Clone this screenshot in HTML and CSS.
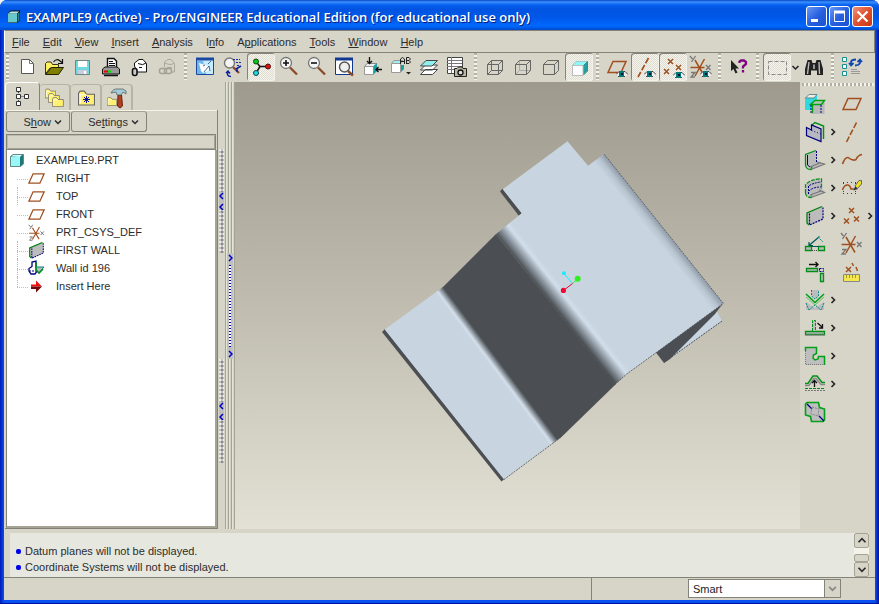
FILE: index.html
```html
<!DOCTYPE html>
<html lang="en">
<head>
<meta charset="utf-8">
<title>EXAMPLE9 (Active) - Pro/ENGINEER Educational Edition</title>
<link rel="stylesheet" href="styles.css">
</head>
<body>
<svg class="defs" aria-hidden="true">
  <symbol id="eye" viewBox="0 0 12 8"><path d="M0 4.500L3 1.500H9L12 4.500L9 7H3Z" fill="#eee"/><path d="M0 4.500L3 1.500H9L12 4.500M2 6.500H9" fill="none" stroke="#444"/><rect x="3" y="1" width="5" height="6" fill="#007878"/><rect x="5" y="3" width="2" height="2" fill="#013"/></symbol>
  <symbol id="plane" viewBox="0 0 28 28"><path d="M10 8.500H23L18 19.500H5Z" fill="none" stroke="#a05020" stroke-width="1.500"/></symbol>
  <symbol id="csys" viewBox="0 0 28 28"><path d="M3.500 14.500H17.500M8 7L17 22.500M17.500 6L8 23" fill="none" stroke="#a05020" stroke-width="1.500"/><path d="M3 3L5.500 6M8.500 3L4.500 9M19 12L23.500 17M23.500 12L19 17M4 19.500H8L4 24H8" fill="none" stroke="#777" stroke-width="1.300"/></symbol>
  <symbol id="chev-r" viewBox="0 0 9 28"><path d="M2.500 11L5.500 14L2.500 17" fill="none" stroke="#222" stroke-width="1.600"/></symbol>
  <symbol id="chev-d" viewBox="0 0 8 6"><path d="M1 1.500L4 4.500L7 1.500" fill="none" stroke="currentColor" stroke-width="1.500"/></symbol>
  <symbol id="folder" viewBox="0 0 16 14"><path d="M.5 13.500V2.500L2 .5H6L8 3.500H15.500V13.500Z" fill="#fff070" stroke="#666"/><path d="M2 12V4H8" fill="none" stroke="#fff"/></symbol>
  <symbol id="lens" viewBox="0 0 28 28"><path d="M15 14.500L22 21.500" stroke="#8a4a28" stroke-width="2.300"/><circle cx="11" cy="10" r="5.500" fill="#f4f4f4" stroke="#777" stroke-width="1.300"/></symbol>
  <symbol id="wall" viewBox="0 0 28 28"><path d="M7 10.500L22 4.500V17L8 23.500L5.500 21V11.500Z" fill="#bcbcbc"/><path d="M8.500 11.500V23L22 17V5.500" fill="none" stroke="#000080" stroke-width="1.200" stroke-dasharray="2 1"/><path d="M8 23L6 21V11L21 4.500" fill="none" stroke="#008010" stroke-width="1.300"/></symbol>
</svg>
<div class="window">
  <header class="titlebar">
    <svg class="appicon" width="14" height="14" viewBox="0 0 14 14"><path d="M1 3L4 .5H13V10L10 13H1Z" fill="#111"/><path d="M1 3.500H10V12.500H1Z" fill="#68c8cc"/><path d="M1 3.500L4 1.500H12L10 3.500Z" fill="#b0f0f0"/><path d="M10.500 12V4L12.500 2V10Z" fill="#308088"/></svg>
    <h1>EXAMPLE9 (Active) - Pro/ENGINEER Educational Edition (for educational use only)</h1>
    <button class="cap" aria-label="Minimize"><svg width="19" height="19"><rect x="4" y="12" width="7" height="3" fill="#fff"/></svg></button>
    <button class="cap" aria-label="Maximize"><svg width="19" height="19"><path d="M4.500 4.500H14.500V14.500H4.500Z" fill="none" stroke="#fff"/><path d="M4 5H15" stroke="#fff" stroke-width="3"/></svg></button>
    <button class="cap close" aria-label="Close"><svg width="19" height="19"><path d="M4.500 4.500L14.500 14.500M14.500 4.500L4.500 14.500" stroke="#fff" stroke-width="2.200"/></svg></button>
  </header>
  <div class="client">
  <nav class="menubar">
    <a href="#"><u>F</u>ile</a><a href="#"><u>E</u>dit</a><a href="#"><u>V</u>iew</a><a href="#"><u>I</u>nsert</a><a href="#"><u>A</u>nalysis</a><a href="#">I<u>n</u>fo</a><a href="#">A<u>p</u>plications</a><a href="#"><u>T</u>ools</a><a href="#"><u>W</u>indow</a><a href="#"><u>H</u>elp</a>
  </nav>
  <div class="toolbar">
    <i class="grip"></i>
    <button aria-label="New"><svg viewBox="0 0 28 28"><path d="M8.500 6.500H16.500L20.500 10.500V20.500H8.500Z" fill="#fff" stroke="#555"/><path d="M16.500 6.500V10.500H20.500" fill="none" stroke="#777"/></svg></button>
    <button aria-label="Open"><svg viewBox="0 0 28 28"><path d="M4.500 21V10.500L6 9H10L11.500 11.500H17.500V15H9Z" fill="#fff060" stroke="#332"/><path d="M4.500 21.500L10.500 14.500H22.500L17.500 21.500Z" fill="#808000" stroke="#220"/><path d="M12.500 9Q15.500 5 19 8L21 9.500M21.500 6V10.500H17" fill="none" stroke="#111" stroke-width="1.200"/></svg></button>
    <button aria-label="Save"><svg viewBox="0 0 28 28"><path d="M6.500 7.500H20.500V21.500H6.500Z" fill="#70d8e0" stroke="#688"/><path d="M9 8H18V14H9Z" fill="#fff"/><path d="M9 17H18V21H9Z" fill="#ccd"/><path d="M15 18H17V21H15Z" fill="#fff"/></svg></button>
    <button aria-label="Print"><svg viewBox="0 0 28 28"><path d="M10.500 15.500V5.500H17L19.500 8V15.500Z" fill="#fff" stroke="#111" stroke-width="1.400"/><path d="M12 8.500H16M12 10.500H18M12 12.500H18" stroke="#111"/><path d="M5.500 16L8 14H20L22.500 16V21H5.500Z" fill="#999" stroke="#111"/><path d="M7 22.500H21" stroke="#111" stroke-width="1.500"/><path d="M7 18.500H11" stroke="#e00" stroke-width="2"/><path d="M11 18.500H14" stroke="#0d0" stroke-width="2"/></svg></button>
    <button aria-label="Mail"><svg viewBox="0 0 28 28"><path d="M9.500 13V10L14 6.500H18L21.500 10.500V19H12Z" fill="#fff" stroke="#111"/><path d="M13 10.500Q18 13 21 10" fill="none" stroke="#111"/><rect x="7.500" y="15.500" width="4.500" height="7" rx="2" fill="#ccc" stroke="#111" stroke-width="1.600"/><path d="M14 14.500H17" stroke="#111"/></svg></button>
    <button aria-label="Mail link" disabled><svg viewBox="0 0 28 28"><path d="M11.500 14V9L15 6.500H18L21.500 10.500V19H19M12 10Q18 13 21 10M14 14.500H19" fill="none" stroke="#aaa79a"/><rect x="6.500" y="15.500" width="7" height="5" rx="2" fill="none" stroke="#a4a194" stroke-width="1.500"/><rect x="11.500" y="15.500" width="7" height="5" rx="2" fill="none" stroke="#a4a194" stroke-width="1.500"/></svg></button>
    <i class="grip"></i>
    <button aria-label="Repaint"><svg viewBox="0 0 28 28"><path d="M5.500 5.500H22.500V21.500H5.500Z" fill="#c4ecfc" stroke="#1848a0"/><path d="M5 6H23" stroke="#1848a0" stroke-width="3"/><path d="M6 8H12L15 21H6Z" fill="#70b4e8"/><path d="M8 10L17 13L19 17L12 20L10 18Z" fill="#fff"/><path d="M17 11L20 8M13 19L18 13L19 18M12 13L14 12" fill="none" stroke="#204880" stroke-width=".8"/></svg></button>
    <button aria-label="Spin center"><svg viewBox="0 0 28 28"><path d="M14 14L20 20" stroke="#8a4a28" stroke-width="2.300"/><circle cx="10.500" cy="10" r="5" fill="#f4f4f4" stroke="#777" stroke-width="1.400"/><path d="M14 6.500H21M17 9.500H22M18 12.500H21" stroke="#1030b0" stroke-dasharray="2 1"/><path d="M12 23.500Q7 23 9 19M7 20L9 18L11 20.500M17 16L22 13M18 19V16" fill="none" stroke="#1020a0" stroke-width="1.500"/></svg></button>
    <button class="on" aria-label="Orient mode"><svg viewBox="0 0 28 28"><path d="M9 8.500L13 13.500L9 20M13 13.500H21" fill="none" stroke="#111" stroke-width="1.500"/><circle cx="9" cy="8.500" r="2.500" fill="#0c1" stroke="#141"/><circle cx="21" cy="13.500" r="2.500" fill="#e01010" stroke="#411"/><circle cx="9" cy="20" r="2.500" fill="#20dce0" stroke="#144"/></svg></button>
    <button aria-label="Zoom in"><svg viewBox="0 0 28 28"><use href="#lens"/><path d="M8 10H14M11 7V13" stroke="#111" stroke-width="1.600"/></svg></button>
    <button aria-label="Zoom out"><svg viewBox="0 0 28 28"><use href="#lens"/><path d="M8 10H14" stroke="#111" stroke-width="1.600"/></svg></button>
    <button aria-label="Refit"><svg viewBox="0 0 28 28"><path d="M4.500 5.500H21.500V21.500H4.500Z" fill="#fff" stroke="#103890"/><path d="M4 6H22" stroke="#103890" stroke-width="3"/><path d="M17 18L22 22.500" stroke="#8a4a28" stroke-width="2.400"/><circle cx="13.500" cy="14" r="5" fill="#eee" stroke="#555" stroke-width="1.400"/></svg></button>
    <button aria-label="Reorient"><svg viewBox="0 0 28 28"><path d="M5.500 13.500L8 10.500H18L14.500 13.500Z" fill="#eee" stroke="#888"/><path d="M5.500 13.500H14.500V21.500H5.500Z" fill="#fff" stroke="#999"/><path d="M14.500 13L18 10.500V18L14.500 21.500Z" fill="#18a0a0"/><path d="M10.500 4V10M8 8L10.500 10.500L13 8M23 16.500H17M19.500 14L17 16.500L19.500 19" fill="none" stroke="#111" stroke-width="1.300"/></svg></button>
    <button aria-label="Saved views"><svg viewBox="0 0 28 28"><path d="M4.500 10.500L7 7.500H16L13.500 10.500Z" fill="#a0f0f0" stroke="#999"/><path d="M4.500 10.500H13.500V19.500H4.500Z" fill="#fff" stroke="#999"/><path d="M14 12H17V16L14 19Z" fill="#18a0a0"/><path d="M13.500 11V6L15.500 4.500L17.500 6V11M14 8.500H17M19.500 11V4.500H22L23.500 6L22 7.500H19.500M22 7.500L23.500 9L22 10.500H19.500" fill="none" stroke="#222"/><path d="M19 19H24L21.500 21.500Z" fill="#222"/></svg></button>
    <button aria-label="Layers"><svg viewBox="0 0 28 28"><path d="M5.500 21.500L10.500 16.500H22.500L17.500 21.500ZM5.500 17L10.500 12H22.500L17.500 17Z" fill="#fff" stroke="#444"/><path d="M5.500 13L11 7.500H22.500L17 13Z" fill="#90f0f0" stroke="#444"/></svg></button>
    <button aria-label="View manager"><svg viewBox="0 0 28 28"><path d="M4.500 4.500H19.500V20.500H4.500Z" fill="#fff" stroke="#444"/><path d="M4 7.500H19M4 10.500H19M4 13.500H19M4 16.500H19M8.500 4V20" stroke="#777"/><path d="M11.500 15.500H14L15.500 14H19L20 15.500H23.500V23.500H11.500Z" fill="#bbb8a0" stroke="#222"/><circle cx="17.500" cy="19.500" r="2.500" fill="#ddd" stroke="#111" stroke-width="1.300"/></svg></button>
    <i class="grip"></i>
    <button aria-label="Wireframe"><svg viewBox="0 0 28 28"><path d="M6.500 11.500H17.500V21.500H6.500ZM10.500 7.500H21.500V17.500H10.500ZM6.500 11.500L10.500 7.500M17.500 11.500L21.500 7.500M17.500 21.500L21.500 17.500M6.500 21.500L10.500 17.500" fill="none" stroke="#666"/></svg></button>
    <button aria-label="Hidden line"><svg viewBox="0 0 28 28"><path d="M10.500 7.500V17.500H21.500M10.500 17.500L6.500 21.500" fill="none" stroke="#aaa"/><path d="M6.500 11.500H17.500V21.500H6.500ZM6.500 11.500L10.500 7.500H21.500V17.500L17.500 21.500M17.500 11.500L21.500 7.500" fill="none" stroke="#666"/></svg></button>
    <button aria-label="No hidden"><svg viewBox="0 0 28 28"><path d="M6.500 11.500H17.500V21.500H6.500ZM6.500 11.500L10.500 7.500H21.500V17.500L17.500 21.500M17.500 11.500L21.500 7.500" fill="none" stroke="#666"/></svg></button>
    <button class="on" aria-label="Shading"><svg viewBox="0 0 28 28"><path d="M7.500 12.500L11 8.500H22.500L18.500 12.500Z" fill="#90f8f8" stroke="#9cc"/><path d="M18.500 12.500L22.500 8.500V18L18.500 22Z" fill="#20a0a0" stroke="#4a8888"/><path d="M7.500 12.500H18V22.500H7.500Z" fill="#fff" stroke="#bbb"/></svg></button>
    <i class="grip"></i>
    <button aria-label="Plane display"><svg viewBox="0 0 28 28"><use href="#plane"/><use href="#eye" x="13" y="17" width="12" height="8"/></svg></button>
    <button class="on" aria-label="Axis display"><svg viewBox="0 0 28 28"><path d="M17.500 5L7 24" stroke="#a05020" stroke-width="1.600" stroke-dasharray="6 2"/><use href="#eye" x="13" y="17" width="12" height="8"/></svg></button>
    <button class="on" aria-label="Point display"><svg viewBox="0 0 28 28"><path d="M9 6L14 11M14 6L9 11M17 12L22 17M22 12L17 17M5 16L10 21M10 16L5 21" stroke="#a05020" stroke-width="1.500"/><use href="#eye" x="14" y="18" width="12" height="8"/></svg></button>
    <button aria-label="Coordinate system display"><svg viewBox="0 0 28 28"><use href="#csys"/><use href="#eye" x="13" y="17" width="12" height="8"/></svg></button>
    <i class="grip"></i>
    <button aria-label="Context help"><svg viewBox="0 0 28 28"><path d="M6 7V18L8.500 16L10.500 20.500L12.500 19.500L10.500 15.500H14Z" fill="#222"/><path d="M14.500 10V8.500L16 7.500H19L21 9V11L18 13.500V15.500M18 17V19.500" fill="none" stroke="#800080" stroke-width="2.300"/></svg></button>
    <i class="grip"></i>
    <button class="on" aria-label="Select box"><svg viewBox="0 0 28 28"><path d="M5.500 8.500H23.500V21.500H5.500Z" fill="none" stroke="#888" stroke-dasharray="4 2"/></svg></button>
    <button class="narrow" aria-label="Select options"><svg viewBox="0 0 9 28"><path d="M1.500 13L4.500 16L7.500 13" fill="none" stroke="#222" stroke-width="1.500"/></svg></button>
    <button aria-label="Find"><svg viewBox="0 0 28 28"><path d="M7.500 7H11.500L12.500 10H15.500L16.500 7H20.500L23 16V22H17V17.500H11V22H5V16Z" fill="#222"/><path d="M9 9L7.500 21M19 9L19.500 21" stroke="#bbb" stroke-width="1.400"/><path d="M13 11.500H15V16H13Z" fill="#999"/></svg></button>
    <i class="grip"></i>
    <button aria-label="Regenerate"><svg viewBox="0 0 28 28"><path d="M4.500 4.500H8.500V8.500H4.500ZM4.500 11.500H8.500V15.500H4.500ZM4.500 18.500H8.500V22.500H4.500Z" fill="#fff" stroke="#189090"/><path d="M13 12V9Q13.500 6.500 18 6.500M11 10L13 12.500L15.500 10M22 7V10Q21 12.500 17 12.500M19.500 9L22 6.500L24 9" fill="none" stroke="#1048b0" stroke-width="1.800"/><path d="M13 16.500H19M13 18.500H22M13 20.500H22" stroke="#999"/></svg></button>
  </div>
  <main class="work">
    <aside class="navigator">
      <div class="tabs">
        <button class="tab current" aria-label="Model tree"><svg width="16" height="22" viewBox="0 0 16 22"><path d="M3.500 4V17M3.500 10.500H10" stroke="#444" stroke-dasharray="1 1"/><path d="M1.500 1.500H5.500V5.500H1.500ZM1.500 8.500H5.500V12.500H1.500ZM9.500 8.500H13.500V12.500H9.500ZM1.500 15.500H5.500V19.500H1.500Z" fill="#fff" stroke="#333"/></svg></button>
        <button class="tab" aria-label="Folder browser"><svg width="20" height="20" viewBox="0 0 20 20"><use href="#folder" x="0" y="0" width="11" height="11"/><use href="#folder" x="3" y="5" width="12" height="10"/><use href="#folder" x="7" y="9" width="12" height="10"/></svg></button>
        <button class="tab" aria-label="Favorites"><svg width="18" height="18" viewBox="0 0 18 18"><use href="#folder" x="1" y="1" width="17" height="16"/><path d="M6 10.500H13M9.500 7V14M7 8L12 13M12 8L7 13" stroke="#1010a0"/></svg></button>
        <button class="tab" aria-label="Connections"><svg width="22" height="22" viewBox="0 0 22 22"><use href="#folder" x="1" y="9" width="10" height="11"/><path d="M12 8H15.500L16.500 19L14 21L11.500 19Z" fill="#b04020" stroke="#621"/><path d="M5 6Q7 1.500 12 2H17L20 4V7L17 5L15 8H11L10 5Z" fill="#a4ccd8" stroke="#566" stroke-width=".8"/></svg></button>
      </div>
      <div class="panel">
        <div class="actions">
          <button class="show"><span>S<u>h</u>ow</span><svg width="8" height="6"><use href="#chev-d"/></svg></button>
          <button class="settings"><span>Se<u>t</u>tings</span><svg width="8" height="6"><use href="#chev-d"/></svg></button>
        </div>
        <div class="colhead"></div>
        <div class="tree">
          <div class="root"><svg width="14" height="14" viewBox="0 0 14 14"><path d="M.5 3.500L3 1.500H13.500V11L10.500 13.500H.5Z" fill="#207878" stroke="#688"/><path d="M1 4H10V13H1Z" fill="#98f8f8"/><path d="M1 3.500L3 2H12L10 4Z" fill="#c8ffff"/></svg>EXAMPLE9.PRT</div>
          <ul>
            <li><svg viewBox="4 4 20 20"><use href="#plane" width="28" height="28"/></svg>RIGHT</li>
            <li><svg viewBox="4 4 20 20"><use href="#plane" width="28" height="28"/></svg>TOP</li>
            <li><svg viewBox="4 4 20 20"><use href="#plane" width="28" height="28"/></svg>FRONT</li>
            <li><svg viewBox="2 2 23 23"><use href="#csys" width="28" height="28"/></svg>PRT_CSYS_DEF</li>
            <li><svg viewBox="4 4 20 20"><use href="#wall" width="28" height="28"/></svg>FIRST WALL</li>
            <li><svg viewBox="0 0 17 17"><path d="M1 8.500L4 6.500V2L8 1V6L9 11L7 14H3L1 11Z" fill="#fff" stroke="#000080" stroke-width="1.300"/><path d="M1 11H10" stroke="#000080" stroke-dasharray="2 1"/><path d="M8 7H16L11 13L8 10Z" fill="#bbb" stroke="#088"/><path d="M8 2V10L11 13L15 9" fill="none" stroke="#009020" stroke-width="1.600"/></svg>Wall id 196</li>
            <li><svg viewBox="0 0 17 17"><path d="M3 6.500H8V2.500L14 8.500H3Z" fill="#f01010"/><path d="M3 8.500H14L8 14.500V11H3Z" fill="#700808"/></svg>Insert Here</li>
          </ul>
        </div>
      </div>
    </aside>
    <div class="sash left"><div class="handle"><svg width="5" height="18"><path d="M4 1L1 4L4 7M4 12L1 15L4 18" fill="none" stroke="#0000c0" stroke-width="1.500"/></svg></div><div class="handle"><svg width="5" height="18"><path d="M4 1L1 4L4 7M4 12L1 15L4 18" fill="none" stroke="#0000c0" stroke-width="1.500"/></svg></div></div>
    <div class="sash right"><div class="bluehandle"><svg width="5" height="8"><path d="M1 1L4 4L1 7" fill="none" stroke="#0000c0" stroke-width="1.500"/></svg><i></i><svg width="5" height="8"><path d="M1 1L4 4L1 7" fill="none" stroke="#0000c0" stroke-width="1.500"/></svg></div></div>
    <section class="viewport" aria-label="Model view">
      <svg viewBox="235 82 565 447" role="img" aria-label="Shaded sheet metal part">
        <defs>
          <linearGradient id="b1" gradientUnits="userSpaceOnUse" x1="436" y1="294" x2="444" y2="288"><stop offset="0" stop-color="#c8d5e1"/><stop offset=".3" stop-color="#d2deea"/><stop offset="1" stop-color="#4b4f53"/></linearGradient>
          <linearGradient id="b2" gradientUnits="userSpaceOnUse" x1="496" y1="234" x2="511" y2="222"><stop offset="0" stop-color="#4b4f53"/><stop offset=".35" stop-color="#87929c"/><stop offset=".75" stop-color="#d2deea"/><stop offset="1" stop-color="#c8d5e1"/></linearGradient>
          <linearGradient id="b3" gradientUnits="userSpaceOnUse" x1="604" y1="154" x2="594" y2="162"><stop offset="0" stop-color="#8e9ba6"/><stop offset=".5" stop-color="#b7c4d0"/><stop offset="1" stop-color="#c8d5e1"/></linearGradient>
        </defs>
        <path d="M715.700 309L722 321L670 359Z" fill="#c8d5e1"/>
        <path d="M722 321L664 362.500" stroke="#4b4f53" stroke-dasharray="2 1"/>
        <path d="M723 303.500L656 352.500L664 363L670 359L715 314Z" fill="#4b4f53"/>
        <path d="M382 332L385 329L504.500 479L501.500 481.500Z" fill="#4b4f53"/>
        <path d="M442 288L496 234L615.500 384.500L562 436.500L559 436Z" fill="#4b4f53"/>
        <path d="M384.700 329.500L442.700 287.300L562 436.500L504 479.500Z" fill="url(#b1)"/>
        <path d="M502.500 188.500L500 191.500L519 216L522 213Z" fill="#4b4f53"/>
        <path d="M496 234L521.700 213.300L502.700 189.300L567.500 141.300L588 165.700L604.300 154.300L723.300 303.300L626.700 374L615 384.500Z" fill="url(#b2)"/>
        <path d="M592.500 162.600L604.300 154.300L723.300 303.300L711 312Z" fill="url(#b3)"/>
        <path d="M504 479.500L562 436.500M615 384.500L626.700 374L657 352M604.300 154.300L723.300 303.300L657 352" fill="none" stroke="#4b4f53" stroke-width=".8" stroke-dasharray="2 1"/>
        <path d="M572.500 283.500L564 273.500" stroke="#10f0ff"/><path d="M572.500 283.500L578 278.500" stroke="#30f020"/><path d="M572.500 283.500L563.500 290.500" stroke="#f00030"/>
        <circle cx="564" cy="273.300" r="2" fill="#10f0ff"/><circle cx="577.700" cy="278.700" r="3" fill="#30f020"/><circle cx="563.400" cy="290.400" r="2.600" fill="#f00838"/>
      </svg>
    </section>
    <aside class="palette">
      <i class="hgrip"></i>
      <div class="tools">
        <button aria-label="Conversion"><svg viewBox="0 0 28 28"><path d="M4 8L9 4.500H16V10L12 17V20H4Z" fill="#30d8e0"/><path d="M4.500 8L8 4.500H16L13 8Z" fill="#eee" stroke="#688"/><path d="M10.500 16L14 11H23.500V24H10.500Z" fill="#b8b8b8"/><path d="M9.500 14.500L14 10.500H23.500L20.500 14.500ZM11.500 15V23" fill="#b8c8b8" stroke="#00a010" stroke-width="1.400"/><path d="M10 15V24M20 15V24" stroke="#000080" stroke-dasharray="2 1"/></svg></button><i></i>
        <button aria-label="Datum plane"><svg viewBox="0 0 28 28"><use href="#plane"/></svg></button><i></i>

        <button aria-label="Flat wall"><svg viewBox="0 0 28 28"><path d="M11 7L14 4.500L22.500 8V21" fill="none" stroke="#009018" stroke-width="1.500"/><path d="M5.500 9.500L10.500 12V7L20 11V23.500L5.500 17.500Z" fill="#b8b8c0" stroke="#000080" stroke-width="1.200"/><path d="M10.500 12.500L20 16" stroke="#000080" stroke-dasharray="1 2"/></svg></button><svg class="more"><use href="#chev-r"/></svg>
        <button aria-label="Datum axis"><svg viewBox="0 0 28 28"><path d="M18.500 4.500L8.500 24" stroke="#a05020" stroke-width="1.600" stroke-dasharray="6 2"/></svg></button><i></i>

        <button aria-label="Flange wall"><svg viewBox="0 0 28 28"><path d="M6 8.500L15.500 4.500V15L23.500 17.500L10.500 23L5.500 20Z" fill="#bbb"/><path d="M4.500 19V8.500L15 4.500M4.500 19Q5 23.500 10 23.500L11 21" fill="none" stroke="#009018" stroke-width="1.300"/><path d="M6.500 9V19L9 21" fill="none" stroke="#000080"/><path d="M15.500 5V16" stroke="#000080" stroke-dasharray="2 1"/><path d="M10 23.500L23.500 18L16 16M9 21L20 16.500" fill="none" stroke="#777" stroke-width="1.200"/></svg></button><svg class="more"><use href="#chev-r"/></svg>
        <button aria-label="Datum curve"><svg viewBox="0 0 28 28"><path d="M4.500 18Q7 11 10 11.500Q15 15.500 18 13.500Q20 9 24 8.500" fill="none" stroke="#a05020" stroke-width="1.600"/></svg></button><i></i>

        <button aria-label="Extend wall"><svg viewBox="0 0 28 28"><path d="M5 12Q9 6 19 5L21 15L23.500 18L10 23L5 20Z" fill="#bbb"/><path d="M4.500 19V11Q10 4.500 20.500 5V15M4.500 19Q5 23.500 10 23.500L11 21" fill="none" stroke="#009018" stroke-width="1.300" stroke-dasharray="4 1"/><path d="M7.500 20V12Q12 9 20 8M8 17Q12 13 20 13" fill="none" stroke="#000080" stroke-dasharray="2 1"/><path d="M10 23.500L23.500 18.500L18 16M9 21L20 17" fill="none" stroke="#777" stroke-width="1.200"/></svg></button><svg class="more"><use href="#chev-r"/></svg>
        <button aria-label="Sketch"><svg viewBox="0 0 28 28"><path d="M5 8.500H18M5 19.500H18M5.500 9V19M17.500 9V19" stroke="#1040c0" stroke-dasharray="1 3"/><path d="M4.500 16Q6 11 9.500 11Q12 11 13 15L16 15" fill="none" stroke="#a05020" stroke-width="1.600"/><path d="M15.500 16.500L17 12.500L20 15Z" fill="#333"/><path d="M17 12L21 6.500H23.500V10L19.500 14.500Z" fill="#f0e020" stroke="#666"/></svg></button><i></i>

        <button aria-label="Unattached wall"><svg viewBox="0 0 28 28"><use href="#wall"/></svg></button><svg class="more"><use href="#chev-r"/></svg>
        <button aria-label="Datum point"><svg viewBox="0 0 28 28"><path d="M11 6L16 11M16 6L11 11M16 14.500L21 19.500M21 14.500L16 19.500M6 16.500L11 21.500M11 16.500L6 21.500" stroke="#a05020" stroke-width="1.500"/></svg></button><svg class="more"><use href="#chev-r"/></svg>

        <button aria-label="Bend"><svg viewBox="0 0 28 28"><path d="M4.500 16.500H10.500V20.500H4.500ZM17.500 16.500H23.500V20.500H17.500Z" fill="#bbb" stroke="#009018" stroke-width="1.300"/><path d="M8 15.500L18.500 6.500M8 12V15.500H12M10 16.500H18" fill="none" stroke="#055" stroke-width="1.200"/><path d="M17 7L22 12" stroke="#088" stroke-dasharray="2 1"/><path d="M11 20.500H17" stroke="#444" stroke-dasharray="1 1"/></svg></button><i></i>
        <button aria-label="Coordinate system"><svg viewBox="0 0 28 28"><use href="#csys"/></svg></button><i></i>

        <button aria-label="Extend"><svg viewBox="0 0 28 28"><path d="M8 6.500H17M14.500 4L17 6.500L14.500 9" fill="none" stroke="#111" stroke-width="1.300"/><path d="M5.500 10.500H16.500V13.500H5.500ZM19.500 15.500H22.500V23.500H19.500Z" fill="#bbb" stroke="#009018" stroke-width="1.300"/><path d="M18.500 10.500H22.500V13.500H18.500Z" fill="none" stroke="#000080" stroke-dasharray="2 1"/></svg></button><i></i>
        <button aria-label="Analysis"><svg viewBox="0 0 28 28"><path d="M8 9L13 14M13 9L8 14M14 5L15.500 8M18 9L19.500 13" stroke="#a05020" stroke-width="1.500"/><path d="M5.500 16.500H21.500V23.500H5.500Z" fill="#f4e850" stroke="#888"/><path d="M8.500 17V20M11.500 17V20M14.500 17V20M17.500 17V20" stroke="#a89828"/></svg></button><i></i>

        <button aria-label="Unbend"><svg viewBox="0 0 28 28"><path d="M5 16L14 22L23 16V24H5ZM11 4H17V10L14 13L11 10Z" fill="#bcbcbc"/><path d="M10.500 4V10L14 13L17.500 10V4M5 17L8 24M23 17L20 24M8 24L14 19L20 24" fill="none" stroke="#088" stroke-dasharray="2 1"/><path d="M5 8L14 16.500L23 8" fill="none" stroke="#00a018" stroke-width="1.600"/><path d="M5 11L14 19L23 11" fill="none" stroke="#60c060"/></svg></button><svg class="more"><use href="#chev-r"/></svg><i></i><i></i>

        <button aria-label="Bend back"><svg viewBox="0 0 28 28"><path d="M4.500 17.500H23.500V20.500H4.500Z" fill="#bbb" stroke="#009018" stroke-width="1.300"/><path d="M11.500 17V6.500H14.500V17" fill="#bbb" stroke="#009018" stroke-dasharray="3 1"/><path d="M4 21H24" stroke="#777"/><path d="M16.500 9L21.500 13.500M21.500 10V14H18" fill="none" stroke="#111" stroke-width="1.300"/></svg></button><svg class="more"><use href="#chev-r"/></svg><i></i><i></i>

        <button aria-label="Punch"><svg viewBox="0 0 28 28"><path d="M4.500 5.500H15.500V11.500L12.500 13L12 16L14 18L17 17L17.500 14.500H23.500V23H4.500Z" fill="#bebebe"/><path d="M4.500 9V5.500H15.500V11.500L12.500 13L12 16L14 18L17 17L17.500 14.500H23.500V23" fill="none" stroke="#00a018" stroke-width="1.500"/><path d="M4.500 9V22.500H23" fill="none" stroke="#777" stroke-dasharray="1 1"/></svg></button><svg class="more"><use href="#chev-r"/></svg><i></i><i></i>

        <button aria-label="Form"><svg viewBox="0 0 28 28"><path d="M4 13.500H7L12 6H16L21 12.500H24" fill="none" stroke="#009018" stroke-width="1.500"/><path d="M4 15.500H8L13 8.500H15L20 14.500H24" fill="none" stroke="#888" stroke-width="1.300"/><path d="M13.500 17V10.500M11 13L13.500 10.500L16 13" fill="none" stroke="#111" stroke-width="1.300"/><path d="M4 18.500H24" stroke="#008818" stroke-dasharray="3 1"/><path d="M4 20.500H24" stroke="#777" stroke-dasharray="2 1"/></svg></button><svg class="more"><use href="#chev-r"/></svg><i></i><i></i>

        <button aria-label="Flatten"><svg viewBox="0 0 28 28"><path d="M6 4.500H17.500L18.500 9.500L23.500 11V22L22 23.500H10.500L9.500 18.500L4.500 17V6Z" fill="#bebebe" stroke="#00a018" stroke-width="1.600"/><path d="M6 6L11 11M18 18L23 23" stroke="#000080" stroke-width="1.300"/><path d="M11 9L18 11L17 18L10 16Z" fill="none" stroke="#888" stroke-dasharray="2 1"/></svg></button><i></i><i></i><i></i>
      </div>
    </aside>
  </main>
  <div class="messages">
    <ul>
      <li>Datum planes will not be displayed.</li>
      <li>Coordinate Systems will not be displayed.</li>
    </ul>
    <div class="scroll">
      <button aria-label="Scroll up"><svg class="up" width="10" height="7" viewBox="0 0 8 6"><use href="#chev-d"/></svg></button>
      <i></i>
      <button aria-label="Scroll down"><svg width="10" height="7" viewBox="0 0 8 6"><use href="#chev-d"/></svg></button>
    </div>
  </div>
  <footer class="status">
    <div class="prompt"></div>
    <div class="filter"><span class="combo"><select aria-label="Selection filter"><option>Smart</option></select><svg width="9" height="7" viewBox="0 0 8 6"><use href="#chev-d"/></svg></span></div>
  </footer>
  </div>
</div>
</body>
</html>
```
FILE: styles.css
```css
:root {
  --face: #d7d4c8;
  --line: #84837a;
  --soft: #a5a393;
  --dither: conic-gradient(#f4f3ec 25%, #dfddd2 0 50%, #f4f3ec 0 75%, #dfddd2 0) 0 0 / 2px 2px;
}
* { box-sizing: border-box; }
body {
  margin: 0;
  background: #f4f4f0;
  color: #2c2c2c;
  font: 11px/16px "Liberation Sans", sans-serif;
}
button {
  padding: 0;
  border: 0;
  background: none;
  color: inherit;
  font: inherit;
}
svg { display: block; flex: none; }
.defs { display: none; }
ul { margin: 0; padding: 0; list-style: none; }

.window {
  display: flex;
  flex-direction: column;
  height: 100vh;
  background: linear-gradient(90deg, #0018b8, #0a50f0 4px calc(100% - 4px), #0010a0);
  border-bottom: 1px solid #0010a0;
  border-radius: 7px 7px 0 0;
  overflow: hidden;
}
.titlebar {
  display: flex;
  align-items: center;
  gap: 2px;
  height: 30px;
  padding: 3px 6px 0 7px;
  flex: none;
  background: linear-gradient(#0848c8, #3890ff 2px, #0860f0 5px, #0054e0 9px, #0058ea 18px, #0068ff 26px, #0048c8);
}
.appicon { margin-right: 3px; }
.titlebar h1 {
  flex: 1;
  margin: 0;
  color: #fff;
  font: 600 13px/20px "Open Sans", sans-serif;
  text-shadow: 1px 1px #002080;
  white-space: nowrap;
}
.cap {
  width: 21px;
  height: 21px;
  border: 1px solid #fff;
  border-radius: 3px;
  background: linear-gradient(135deg, #6a98f4, #2860e0 50%, #1c50d0);
}
.close { background: linear-gradient(135deg, #f09078, #e05030 50%, #c83810); }

.client {
  display: flex;
  flex-direction: column;
  flex: 1;
  min-height: 0;
  margin: 0 4px 3px;
  background: var(--face);
}
.menubar {
  display: flex;
  gap: 13px;
  padding: 3px 7px 2px;
  border: 1px solid var(--line);
  border-left-color: #fff;
  flex: none;
}
.menubar a { color: inherit; text-decoration: none; }

.toolbar { display: flex; height: 29px; flex: none; }
.toolbar button { width: 28px; height: 28px; }
.toolbar .narrow { width: 9px; }
.toolbar .on {
  background: var(--dither);
  border-radius: 3px;
  box-shadow: inset 1px 1px var(--line), inset -1px -1px #f2f1ea;
}
.toolbar button svg { width: 100%; height: 28px; }
.grip {
  width: 3px;
  height: 27px;
  margin: 0 4px 0 3px;
  background: repeating-linear-gradient(#b2b0a2 0 2px, #f4f3ec 2px 4px);
}
.grip:first-child { margin-left: 2px; }

.work { display: flex; flex: 1; min-height: 0; }
.navigator { display: flex; flex-direction: column; width: 214px; padding-left: 1px; }
.tabs { display: flex; height: 28px; flex: none; }
.tab {
  display: grid;
  place-items: center;
  width: 31px;
  border: solid #b6b4a4;
  border-width: 1px 2px 0 0;
  border-radius: 4px 4px 0 0;
  margin-top: 2px;
}
.tab.current {
  width: 35px;
  margin-top: 0;
  border-color: #fff var(--line) #fff #fff;
  border-width: 1px 1px 0;
}
.panel {
  display: flex;
  flex-direction: column;
  flex: 1;
  min-height: 0;
  padding: 1px 0 0 1px;
  border: solid var(--line);
  border-width: 0 1px 1px 0;
  box-shadow: inset 0 1px #f4f3ec;
}
.actions { display: flex; gap: 1px; padding-bottom: 2px; }
.actions button {
  display: flex;
  align-items: center;
  justify-content: flex-end;
  gap: 3px;
  width: 64px;
  height: 21px;
  padding-right: 7px;
  border: 1px solid var(--line);
  border-radius: 3px;
  border-top-color: var(--soft);
}
.actions .settings { width: 76px; }
.colhead {
  height: 16px;
  flex: none;
  margin-right: 1px;
  border: 1px solid var(--line);
  box-shadow: inset 1px 1px #bdbbad, inset -1px -1px var(--soft);
}
.tree {
  flex: 1;
  min-height: 0;
  overflow: hidden;
  background: #fff;
  border: solid var(--soft);
  border-width: 0 2px 2px 1px;
  border-left-color: var(--line);
  line-height: 18px;
}
.root { display: flex; align-items: center; gap: 12px; padding: 1px 0 0 3px; }
.tree ul { margin-left: 10px; }
.tree li {
  display: flex;
  align-items: center;
  gap: 11px;
  background: repeating-linear-gradient(90deg, #c4c1b2 0 1px, #fff 1px 2px) 0 10px / 12px 1px no-repeat;
}
.tree li::before { content: ""; width: 0; height: 18px; }
.tree li svg { width: 17px; height: 17px; background: #fff; }
.tree li:nth-child(n + 5)::before, .tree li:nth-child(2)::before { border-left: 1px dotted #bbb8a8; margin-right: -1px; }
.tree li:last-child::before { height: 10px; align-self: flex-start; }

.sash { display: flex; flex-direction: column; align-items: center; justify-content: center; flex: none; }
.sash.left { width: 7px; gap: 106px; }
.sash.right {
  width: 10px;
  background: repeating-linear-gradient(90deg, #a4a494 0 1px, #e4e4d6 1px 2px, #d4d2c4 2px 3px);
}
.handle {
  display: grid;
  place-items: center;
  width: 5px;
  height: 104px;
  background:
    radial-gradient(circle at 1px 1px, #eee 1px, transparent 1px) 0 0 / 4px 4px,
    radial-gradient(circle at 3px 3px, #8c8c8c 1px, transparent 1px) 0 0 / 4px 4px,
    #bebebe;
}
.handle svg { background: #bebebe; }
.bluehandle {
  display: flex;
  flex-direction: column;
  align-items: center;
  gap: 3px;
  width: 6px;
  height: 106px;
  padding: 1px 0;
  background: #c0c0c0;
}
.bluehandle i { flex: 1; width: 2px; background: repeating-linear-gradient(#0000b0 0 1px, #fff 1px 3px); }

.viewport {
  flex: 1;
  min-width: 0;
  background: linear-gradient(#9e9b8e, #c0bdb0 50%, #e3e1d5);
}
.viewport svg { width: 100%; height: 100%; }

.palette { flex: none; padding: 1px 0 0 1px; }
.hgrip { display: block; height: 3px; margin: 0 1px 4px; background: repeating-linear-gradient(90deg, #b2b0a2 0 2px, #f4f3ec 2px 4px); }
.tools { display: grid; grid-template-columns: 28px 9px 28px 9px; grid-auto-rows: 28px; }
.tools svg { width: 28px; height: 28px; }
.tools .more { width: 9px; }

.messages {
  display: flex;
  justify-content: space-between;
  margin: 4px 6px 0;
  height: 44px;
  flex: none;
  background: #e6e8e0;
}
.messages ul { padding: 10px 0 0 6px; }
.messages li { display: flex; align-items: center; gap: 4px; }
.messages li::before { content: ""; width: 5px; height: 5px; border-radius: 2px; background: #0000e8; }
.scroll { display: flex; flex-direction: column; justify-content: space-between; width: 15px; background: #f4f3ea; }
.scroll button {
  display: grid;
  place-items: center;
  height: 15px;
  border: 1px solid var(--soft);
  border-radius: 2px;
  background: var(--face);
}
.scroll i { height: 8px; margin-top: 6px; border: 1px solid var(--soft); border-radius: 2px; background: var(--face); }
.up { transform: rotate(180deg); }

.status { display: flex; height: 23px; flex: none; border-top: 1px solid var(--line); }
.prompt { flex: 1; }
.filter { width: 284px; padding: 1px 0 0 96px; border-left: 1px solid var(--line); }
.combo {
  display: flex;
  align-items: center;
  width: 153px;
  height: 19px;
  border: 1px solid var(--line);
  background: linear-gradient(90deg, #fff calc(100% - 16px), var(--line) 0 calc(100% - 15px), var(--face) 0);
  color: #888;
}
.combo select {
  appearance: none;
  flex: 1;
  height: 17px;
  margin-right: -13px;
  padding: 0 4px;
  border: 0;
  background: none;
  color: #222;
  font: inherit;
}
.combo svg { margin-right: 3px; }
```
